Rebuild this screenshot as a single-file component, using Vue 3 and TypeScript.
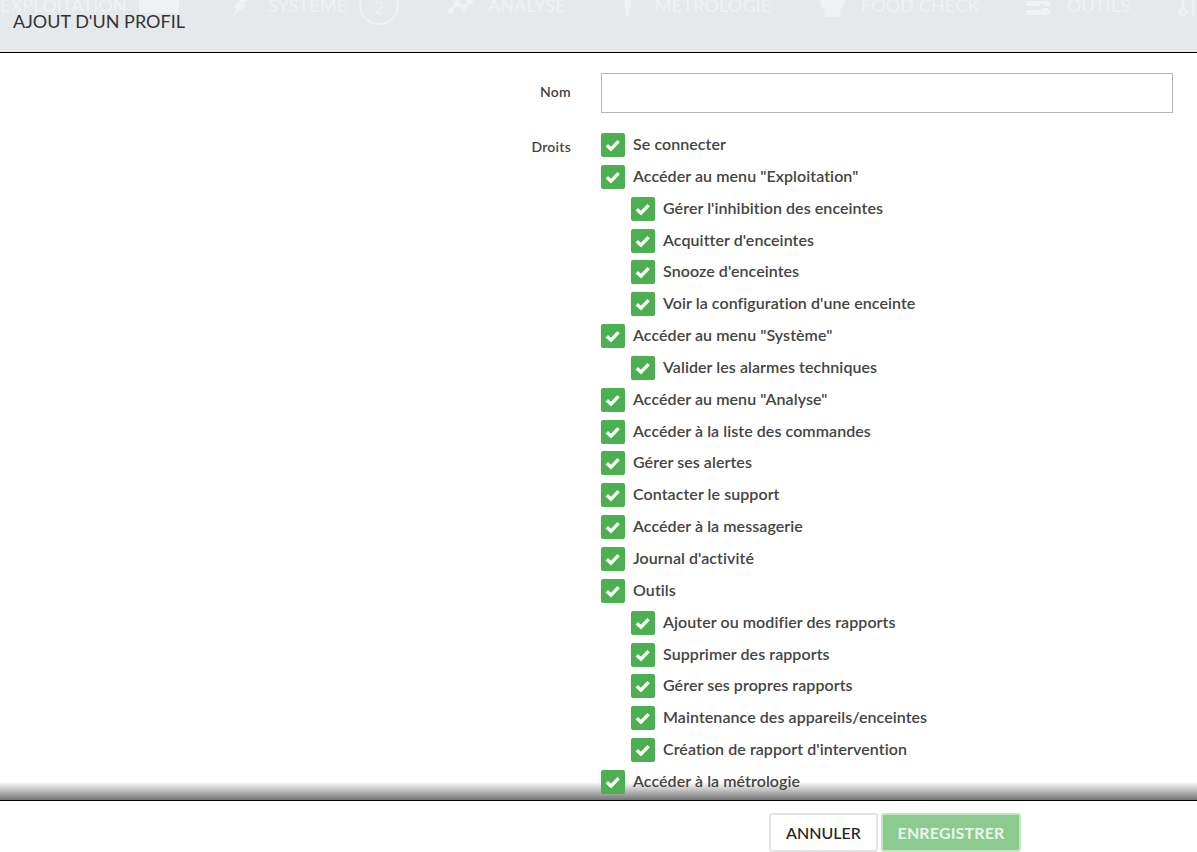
<script setup lang="ts">
interface Right { label: string; sub?: boolean }
interface NavItem { label: string; left: number }
const rights: Right[] = [
  { label: 'Se connecter' },
  { label: 'Accéder au menu "Exploitation"' },
  { label: "Gérer l'inhibition des enceintes", sub: true },
  { label: "Acquitter d'enceintes", sub: true },
  { label: "Snooze d'enceintes", sub: true },
  { label: "Voir la configuration d'une enceinte", sub: true },
  { label: 'Accéder au menu "Système"' },
  { label: 'Valider les alarmes techniques', sub: true },
  { label: 'Accéder au menu "Analyse"' },
  { label: 'Accéder à la liste des commandes' },
  { label: 'Gérer ses alertes' },
  { label: 'Contacter le support' },
  { label: 'Accéder à la messagerie' },
  { label: "Journal d'activité" },
  { label: 'Outils' },
  { label: 'Ajouter ou modifier des rapports', sub: true },
  { label: 'Supprimer des rapports', sub: true },
  { label: 'Gérer ses propres rapports', sub: true },
  { label: 'Maintenance des appareils/enceintes', sub: true },
  { label: "Création de rapport d'intervention", sub: true },
  { label: 'Accéder à la métrologie' },
]
const nav: NavItem[] = [
  { label: 'EXPLOITATION', left: 0 },
  { label: 'SYSTÈME', left: 268 },
  { label: 'ANALYSE', left: 488 },
  { label: 'MÉTROLOGIE', left: 655 },
  { label: 'FOOD CHECK', left: 861 },
  { label: 'OUTILS', left: 1067 },
]
</script>

<template>
  <div class="page">
    <header class="head">
      <svg class="hills" width="1197" height="52" viewBox="0 0 1197 52" fill="none" aria-hidden="true">
        <path d="M0 26 18 12M750 32 790 17 805 32M860 28 920 16M985 33l8-2M1030 38l12-6 18-20 20 28 24-16 30 20" stroke="#e7ebed" stroke-width="1.5"/>
      </svg>
      <div class="ghost" aria-hidden="true">
        <span v-for="n in nav" :key="n.label" class="g" :style="{ left: n.left + 'px' }">{{ n.label }}</span>
        <span class="chip"></span>
        <svg class="gi" style="left:232px" width="17" height="18" viewBox="0 0 17 18"><path d="M9 0h8L10 6h5L0 18 5 9H1z" fill="#eff1f2"/></svg>
        <span class="ring">2</span>
        <svg class="gi" style="left:448px" width="25" height="15" viewBox="0 0 25 15" fill="none" stroke="#eff1f2" stroke-width="2.4"><path d="M3 12 9 4l7 5 6-8"/><circle cx="3" cy="12" r="2" fill="#eff1f2"/><circle cx="9" cy="4" r="2" fill="#eff1f2"/><circle cx="16" cy="9" r="2" fill="#eff1f2"/><circle cx="22" cy="2" r="2" fill="#eff1f2"/></svg>
        <svg class="gi" style="left:623px" width="9" height="17" viewBox="0 0 9 17" fill="#eff1f2"><rect x="1.5" y="0" width="6" height="10"/><circle cx="4.500" cy="12" r="2"/><circle cx="4.500" cy="15" r="2"/></svg>
        <svg class="gi" style="left:820px" width="25" height="18" viewBox="0 0 25 18" fill="#eff1f2"><path d="M2 0h21a4 4 0 0 1 2 4 6 6 0 0 1-4 5l-1 9H5L4 9A6 6 0 0 1 0 4a4 4 0 0 1 2-4z"/></svg>
        <svg class="gi" style="left:1026px" width="24" height="17" viewBox="0 0 24 17" fill="#eff1f2"><path d="M0 2h24v5h-6V4.500H14V7H0zM0 11h16V9h6v2h2v5H0z"/></svg>
        <svg class="gi" style="left:1178px" width="20" height="18" viewBox="0 0 20 18" fill="none" stroke="#eff1f2" stroke-width="2.4"><path d="M5 0v10M15 0v18"/><path d="M5 9l4 4-4 4-4-4z"/></svg>
      </div>
      <h1 class="title">AJOUT D'UN PROFIL</h1>
    </header>

    <main class="body">
      <div class="field name-field">
        <label class="lab">Nom</label>
        <input class="input" type="text" />
      </div>
      <div class="field">
        <label class="lab lab-rights">Droits</label>
        <ul class="rights">
          <li v-for="r in rights" :key="r.label" class="right" :class="{ sub: r.sub }">
            <span class="box">
              <svg width="24" height="24" viewBox="0 0 24 24" fill="none"><path d="M5.800 12.200 10 16.200 17.600 8.200" stroke="#fff" stroke-width="3.400"/></svg>
            </span>
            <span class="txt">{{ r.label }}</span>
          </li>
        </ul>
      </div>
      <div class="fade"></div>
    </main>

    <footer class="foot">
      <button class="btn cancel" type="button">ANNULER</button>
      <button class="btn save" type="button">ENREGISTRER</button>
    </footer>
  </div>
</template>

<style>
html, body { margin: 0; height: 100%; overflow: hidden; background: #fff; }
</style>

<style scoped>
.page {
  width: 1197px;
  height: 852px;
  display: flex;
  flex-direction: column;
  font-family: Lato, "Open Sans", sans-serif;
  color: #333;
  background: #fff;
  overflow: hidden;
}
.head {
  position: relative;
  height: 52px;
  flex: none;
  border-bottom: 1px solid #000;
  background: #e6e9ec;
  overflow: hidden;
}
.hills { position: absolute; left: 0; top: 0; }
.ghost { position: absolute; left: 0; right: 0; top: 0; height: 30px; filter: blur(0.4px); }
.g {
  position: absolute;
  top: -7px;
  font-size: 18px;
  line-height: 24px;
  letter-spacing: 0.15px;
  color: #eff1f2;
  white-space: nowrap;
}
.chip { position: absolute; left: 139px; top: -2px; width: 40px; height: 15px; border-radius: 2px; background: #eff1f2; }
.gi { position: absolute; top: -1px; }
.ring {
  position: absolute;
  left: 359px;
  top: -15px;
  width: 36px;
  height: 36px;
  border: 2px solid #eff1f2;
  border-radius: 50%;
  color: #eff1f2;
  font-size: 18px;
  text-align: center;
  line-height: 41px;
}
.title {
  position: relative;
  margin: 0;
  padding: 10px 0 0 13px;
  font-size: 18px;
  line-height: 22px;
  font-weight: 400;
  color: #333;
}
.body {
  position: relative;
  flex: 1;
  min-height: 0;
  overflow: hidden;
  padding-top: 20px;
}
.field { position: relative; z-index: 1; display: flex; align-items: flex-start; }
.name-field { margin-bottom: 20px; }
.lab {
  width: 571px;
  flex: none;
  text-align: right;
  font-size: 14px;
  font-weight: 600;
  line-height: 38px;
  letter-spacing: 0.25px;
  color: #444;
}
.lab-rights { line-height: 20px; padding-top: 4px; }
.input {
  margin-left: 30px;
  width: 572px;
  height: 40px;
  box-sizing: border-box;
  border: 1px solid #b5b5b5;
  background: #fff;
  outline: none;
}
.rights {
  list-style: none;
  margin: 0 0 0 30px;
  padding: 0;
}
.right {
  display: flex;
  align-items: flex-start;
  gap: 8px;
  height: 31.85px;
}
.right.sub { padding-left: 30px; }
.box {
  width: 24px;
  height: 24px;
  flex: none;
  border-radius: 2px;
  background: #4caf50;
}
.box svg { display: block; }
.txt {
  font-size: 16px;
  font-weight: 600;
  line-height: 22px;
  letter-spacing: 0.07px;
  color: #444;
  white-space: nowrap;
}
.fade {
  position: absolute;
  left: 0;
  right: 0;
  bottom: 0;
  height: 18px;
  background: linear-gradient(to bottom, rgba(110, 110, 110, 0), rgba(110, 110, 110, 0.95));
  pointer-events: none;
}
.foot {
  flex: none;
  height: 39px;
  border-top: 1px solid #000;
  display: flex;
  align-items: flex-start;
  gap: 3px;
  padding: 12px 0 0 769px;
}
.btn {
  height: 39px;
  border-radius: 3px;
  font-family: inherit;
  font-size: 16px;
  padding: 0;
  box-sizing: border-box;
}
.cancel {
  width: 109px;
  background: #fff;
  border: 2px solid #e4e4e4;
  color: #222;
  font-weight: 500;
}
.save {
  width: 140px;
  background: #8ccb8f;
  border: 2px solid #c3e4c5;
  color: #eaf6eb;
  font-weight: 700;
  letter-spacing: 0.15px;
}
</style>
